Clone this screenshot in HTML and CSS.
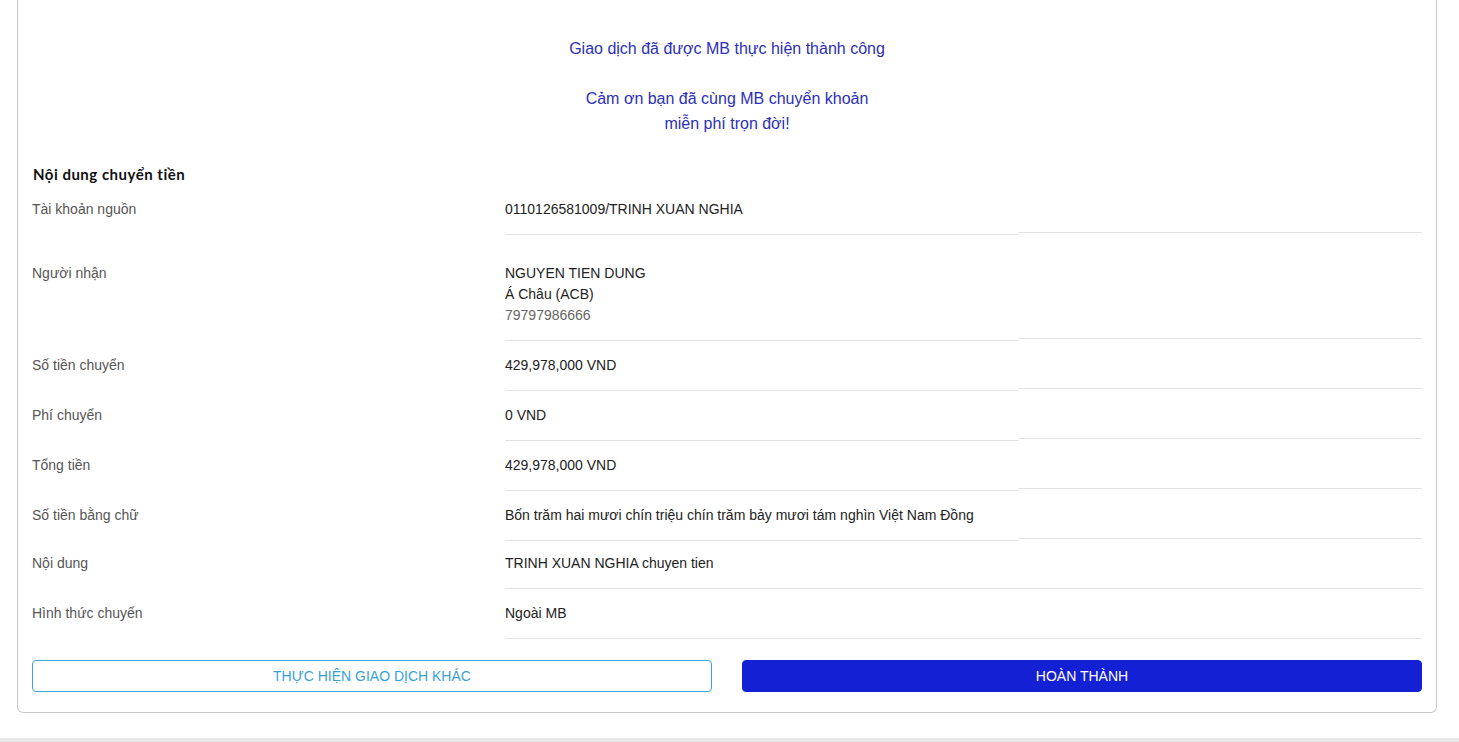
FILE: index.html
```html
<!DOCTYPE html>
<html lang="vi">
<head>
<meta charset="utf-8">
<title>Giao dịch thành công</title>
<link rel="stylesheet" href="styles.css">
</head>
<body>
<main class="card">
  <section class="success">
    <p class="success-line">Giao dịch đã được MB thực hiện thành công</p>
    <p class="success-line thanks">Cảm ơn bạn đã cùng MB chuyển khoản<br>miễn phí trọn đời!</p>
  </section>

  <h2 class="section-title">Nội dung chuyển tiền</h2>

  <div class="rows">
    <div class="row">
      <div class="label">Tài khoản nguồn</div>
      <div class="value">0110126581009/TRINH XUAN NGHIA</div>
      <div class="filler"></div>
    </div>
    <div class="row row-multi">
      <div class="label">Người nhận</div>
      <div class="value">NGUYEN TIEN DUNG<br>Á Châu (ACB)<br><span class="muted">79797986666</span></div>
      <div class="filler"></div>
    </div>
    <div class="row">
      <div class="label">Số tiền chuyển</div>
      <div class="value">429,978,000 VND</div>
      <div class="filler"></div>
    </div>
    <div class="row">
      <div class="label">Phí chuyển</div>
      <div class="value">0 VND</div>
      <div class="filler"></div>
    </div>
    <div class="row">
      <div class="label">Tổng tiền</div>
      <div class="value">429,978,000 VND</div>
      <div class="filler"></div>
    </div>
    <div class="row">
      <div class="label">Số tiền bằng chữ</div>
      <div class="value">Bốn trăm hai mươi chín triệu chín trăm bảy mươi tám nghìn Việt Nam Đồng</div>
      <div class="filler"></div>
    </div>
    <div class="row row-flat row-tight">
      <div class="label">Nội dung</div>
      <div class="value">TRINH XUAN NGHIA chuyen tien</div>
      <div class="filler"></div>
    </div>
    <div class="row row-flat">
      <div class="label">Hình thức chuyển</div>
      <div class="value">Ngoài MB</div>
      <div class="filler"></div>
    </div>
  </div>

  <div class="actions">
    <button class="btn btn-outline" type="button">THỰC HIỆN GIAO DỊCH KHÁC</button>
    <button class="btn btn-primary" type="button">HOÀN THÀNH</button>
  </div>
</main>
<footer class="page-footer"></footer>
</body>
</html>
```

FILE: styles.css
```css
* {
  box-sizing: border-box;
}

html, body {
  margin: 0;
  padding: 0;
  background: #ffffff;
  font-family: "Liberation Sans", Arial, sans-serif;
  font-size: 14px;
  color: #333333;
}

.card {
  width: 1420px;
  margin: 0 0 25px 17px;
  padding: 36px 14px 20px 14px;
  border: 1px solid #c9c9c9;
  border-top: none;
  border-radius: 0 0 6px 6px;
  background: #ffffff;
}

.success {
  text-align: center;
}

.success-line {
  margin: 0;
  font-size: 16px;
  line-height: 25px;
  color: #2b30b8;
}

.thanks {
  margin-top: 25px;
}

.section-title {
  margin: 28px 0 0 1px;
  font-family: "Lato", "Liberation Sans", sans-serif;
  font-weight: 700;
  font-size: 15px;
  letter-spacing: 0.5px;
  line-height: 20px;
  color: #111111;
}

.rows {
  display: flex;
  flex-direction: column;
  margin-top: 1px;
}

.row {
  display: flex;
  align-items: stretch;
  line-height: 20px;
}

.label {
  width: 473px;
  flex: none;
  padding: 14px 0 15px;
  color: #555555;
}

.value {
  width: 514px;
  flex: none;
  padding: 14px 0 15px;
  color: #222222;
  border-bottom: 1px solid #e2e2e2;
}

.filler {
  flex: 1;
  border-bottom: 1px solid #e2e2e2;
  margin-bottom: 2px;
}

.row-multi {
  line-height: 21px;
}

.row-multi .label,
.row-multi .value {
  padding: 28px 0 14px;
}

.row-multi .label {
  line-height: 20px;
}

.row-flat .filler {
  margin-bottom: 0;
}

.row-tight .label,
.row-tight .value {
  padding-top: 12px;
}

.muted {
  color: #666666;
}

.actions {
  display: grid;
  grid-template-columns: 1fr 1fr;
  column-gap: 30px;
  margin-top: 21px;
}

.btn {
  height: 32px;
  border-radius: 4px;
  font-family: "Liberation Sans", Arial, sans-serif;
  font-size: 14px;
  cursor: pointer;
  padding: 0;
}

.btn-outline {
  background: #ffffff;
  border: 1px solid #38a3dc;
  color: #3a9fd6;
}

.btn-primary {
  background: #1320d3;
  border: 1px solid #1320d3;
  color: #ffffff;
}

.page-footer {
  height: 40px;
  background: #e8e8e8;
}
```
